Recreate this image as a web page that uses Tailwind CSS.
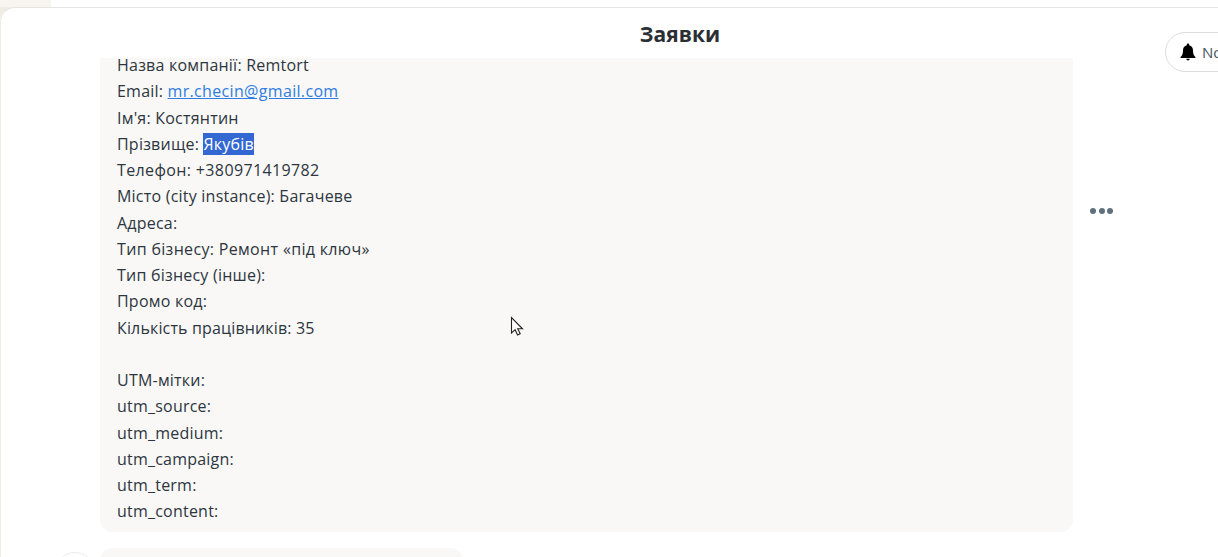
<!DOCTYPE html>
<html lang="uk">
<head>
    <meta charset="UTF-8">
    <title>Заявки</title>
    <script src="https://cdn.jsdelivr.net/npm/@tailwindcss/browser@4"></script>
</head>
<body class="bg-[#f1ece4] h-[557px] w-[1218px] overflow-hidden font-['Open_Sans','Noto_Sans',sans-serif] text-[#2d3640]">
    <div class="h-[7px] flex">
        <div class="w-[51px] bg-[#f8f5f0]"></div>
        <div class="flex-1 bg-white"></div>
    </div>
    <div class="relative ml-px h-[550px] bg-white rounded-tl-[14px] border-t border-[#e6e4e0] overflow-hidden">
        <h1 class="h-[50px] flex items-center justify-center text-[21px] font-bold text-[#2b2f33] tracking-[0.05px] pl-[141px] pt-[3px]">Заявки</h1>

        <div class="flex items-start pl-[99px]">
            <div class="w-[973px] h-[474px] bg-[#f9f8f6] rounded-b-[12px] overflow-hidden pl-[17px]">
                <div class="-mt-[6px] text-[16px] leading-[26.25px] tracking-[0.22px]">
                    <p>Назва компанії: Remtort</p>
                    <p>Email: <a href="#" class="text-[#2f7de1] underline tracking-[0.33px]">mr.checin@gmail.com</a></p>
                    <p>Ім'я: Костянтин</p>
                    <p>Прізвище: <span class="bg-[#3367d1] text-white">Якубів</span></p>
                    <p class="tracking-[0.37px]">Телефон: +380971419782</p>
                    <p>Місто (city instance): Багачеве</p>
                    <p>Адреса:</p>
                    <p class="tracking-[0.33px]">Тип бізнесу: Ремонт «під ключ»</p>
                    <p>Тип бізнесу (інше):</p>
                    <p>Промо код:</p>
                    <p class="tracking-[0.15px]">Кількість працівників: 35</p>
                    <p class="h-[26.25px]"></p>
                    <p>UTM-мітки:</p>
                    <p>utm_source:</p>
                    <p>utm_medium:</p>
                    <p>utm_campaign:</p>
                    <p>utm_term:</p>
                    <p>utm_content:</p>
                </div>
            </div>
            <div class="ml-[17px] mt-[150px] flex gap-[2.5px]">
                <span class="w-[6px] h-[6px] rounded-full bg-[#5f6f7b]"></span>
                <span class="w-[6px] h-[6px] rounded-full bg-[#5f6f7b]"></span>
                <span class="w-[6px] h-[6px] rounded-full bg-[#5f6f7b]"></span>
            </div>
        </div>

        <div class="flex mt-[16px] pl-[54px] gap-[5px]">
            <div class="w-[40px] h-[40px] mt-[4px] rounded-full border border-[#ececec]"></div>
            <div class="w-[363px] h-[40px] bg-[#f9f8f6] rounded-[12px]"></div>
        </div>

        <div class="absolute left-[1164px] top-[24px] w-[80px] h-[40px] flex items-center pl-[14px] gap-[6px] bg-white border border-[#dcdcdc] rounded-full text-[15px] text-[#4a5560]">
            <svg class="w-[16px] h-[18px] shrink-0" viewBox="0 0 16 18" fill="#000">
                <path d="M8 0.5c-.7 0-1.2.5-1.2 1.2v.5C4.400 2.800 3 4.800 3 7.200c0 3.300-.6 4.900-1.700 6L.6 14v.9h14.800V14l-.7-.8c-1.100-1.100-1.700-2.700-1.700-6 0-2.400-1.400-4.400-3.800-5v-.5C9.200 1 8.700.5 8 .5z"/>
                <path d="M6.300 15.700a1.700 1.700 0 0 0 3.400 0z"/>
            </svg>
            <span>Notifications</span>
        </div>

        <svg class="absolute left-[508px] top-[308px] w-[16px] h-[22px]" viewBox="0 0 16 22">
            <path d="M2.500 1.500V17l3.600-3.300 2.500 5.300 2.600-1.200-2.500-5h4.800z" fill="#fff" stroke="#222" stroke-width="1.100"/>
        </svg>
    </div>
</body>
</html>
